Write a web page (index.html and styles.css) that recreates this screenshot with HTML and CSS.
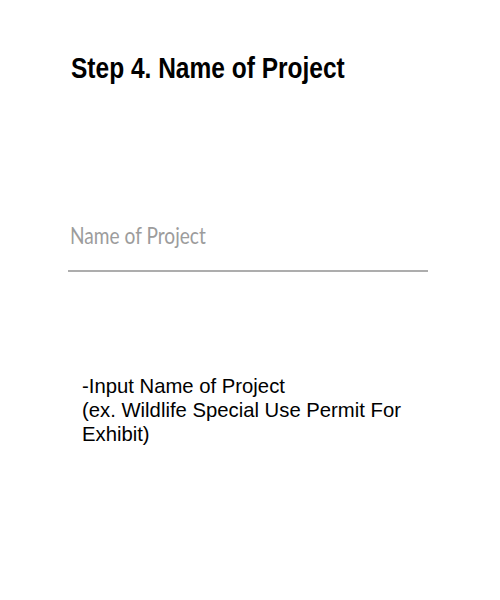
FILE: index.html
```html
<!DOCTYPE html>
<html>
<head>
<meta charset="utf-8">
<link rel="stylesheet" href="styles.css">
</head>
<body>
<div class="page">
  <h1 class="title">Step 4. Name of Project</h1>
  <div class="field">
    <div class="placeholder"><span class="placeholder-text">Name of Project</span></div>
    <div class="underline"></div>
  </div>
  <p class="hint">-Input Name of Project<br>(ex. Wildlife Special Use Permit For Exhibit)</p>
</div>
</body>
</html>
```
FILE: styles.css
```css
html, body {
  margin: 0;
  padding: 0;
  background: #ffffff;
}
.page {
  width: 500px;
  height: 600px;
  display: flex;
  flex-direction: column;
  box-sizing: border-box;
  padding: 51px 0 0 0;
}
.title {
  margin: 0 0 0 71px;
  font-family: "Liberation Sans Narrow", "Arial Narrow", "Liberation Sans", sans-serif;
  font-weight: bold;
  font-size: 29px;
  line-height: 34px;
  color: #000;
  transform: scaleX(0.845);
  transform-origin: left center;
  white-space: nowrap;
}
.field {
  margin: 136px 0 0 68px;
  width: 360px;
  display: flex;
  flex-direction: column;
}
.placeholder {
  padding-left: 2px;
  font-family: Lato, sans-serif;
  font-size: 22.5px;
  line-height: 30px;
  color: #9c9c9c;
}
.placeholder-text {
  display: inline-block;
  transform: scaleX(0.85);
  transform-origin: left center;
  white-space: nowrap;
}
.underline {
  margin-top: 19px;
  height: 2px;
  background: #adadad;
}
.hint {
  margin: 102px 0 0 82px;
  width: 340px;
  font-family: "Liberation Sans", Arial, sans-serif;
  font-size: 20.3px;
  line-height: 24px;
  color: #000;
}
```
